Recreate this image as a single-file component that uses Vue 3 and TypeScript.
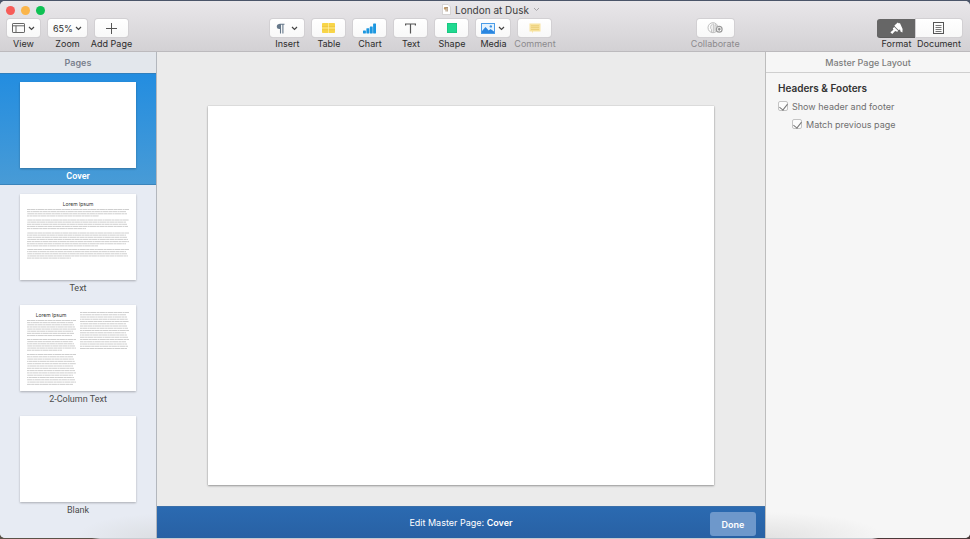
<script setup lang="ts">
import { ref } from 'vue'

interface Line { x: number; y: number; w: number }
interface Master { name: string; title?: 'center' | 'left'; lines: Line[] }

// Rows of simulated body copy, starting at y with a fixed pitch; the last row is shortened.
function paragraph(x: number, y: number, count: number, width: number, last: number, pitch = 2.15): Line[] {
  return Array.from({ length: count }, (_, i) => ({
    x,
    y: y + i * pitch,
    w: i === count - 1 ? last : width - ((i * 7) % 4),
  }))
}

const masters: Master[] = [
  { name: 'Cover', lines: [] },
  {
    name: 'Text',
    title: 'center',
    lines: [
      ...paragraph(7, 15.5, 4, 102, 72),
      ...paragraph(7, 26, 5, 102, 59),
      ...paragraph(7, 39, 7, 102, 71),
      ...paragraph(7, 55.5, 5, 102, 44),
    ],
  },
  {
    name: '2-Column Text',
    title: 'left',
    lines: [
      ...paragraph(7, 15.5, 8, 49, 45),
      ...paragraph(7, 34.5, 6, 49, 35),
      ...paragraph(7, 49.5, 14, 49, 46, 2.3),
      ...paragraph(60, 7.5, 17, 49, 47, 2.25),
    ],
  },
  { name: 'Blank', lines: [] },
]

const selected = ref('Cover')
const zoom = ref('65%')
const panel = ref<'Format' | 'Document'>('Format')
const showHeader = ref(true)
const matchPrevious = ref(true)
</script>

<template>
  <div class="window">
    <header class="toolbar">
      <div class="titlebar">
        <div class="lights">
          <button class="light red" aria-label="Close"></button>
          <button class="light amber" aria-label="Minimize"></button>
          <button class="light green" aria-label="Full screen"></button>
        </div>
        <h1 class="title">
          <svg class="doc" viewBox="0 0 9 11" width="9" height="11">
            <path d="M.5.5h5.500l2.500 2.500v7.500H.5z" fill="#fff" stroke="#c9c6c4" stroke-width=".7" />
            <path d="M2.300 3.500h3.700M4 3.500v4M5.300 3.500v4" stroke="#a58a6c" stroke-width=".9" fill="none" />
            <circle cx="3.100" cy="4.400" r="1.200" fill="#c49a62" />
          </svg>
          <span>London at Dusk</span>
          <svg class="chev pale" viewBox="0 0 7 5" width="7" height="5"><path d="M1 1l2.500 2.500L6 1" /></svg>
        </h1>
      </div>

      <div class="tools">
        <div class="group">
          <div class="tool">
            <button id="t-view" class="btn">
              <svg viewBox="0 0 13 10" width="13" height="10" fill="none" stroke="#666" stroke-width="1">
                <rect x=".5" y=".5" width="12" height="9" rx=".6" /><path d="M.5 2.800h12M4 2.800v6.700" />
              </svg>
              <svg class="chev" viewBox="0 0 7 5" width="7" height="5"><path d="M1 1l2.500 2.500L6 1" /></svg>
            </button>
            <label for="t-view">View</label>
          </div>
          <div class="tool zoom">
            <div class="btn picker">
              <select id="t-zoom" v-model="zoom">
                <option>50%</option><option>65%</option><option>100%</option>
              </select>
              <svg class="chev" viewBox="0 0 7 5" width="7" height="5"><path d="M1 1l2.500 2.500L6 1" /></svg>
            </div>
            <label for="t-zoom">Zoom</label>
          </div>
          <div class="tool">
            <button id="t-add" class="btn">
              <svg viewBox="0 0 11 11" width="11" height="11" stroke="#555" stroke-width="1"><path d="M5.500 0v11M0 5.500h11" /></svg>
            </button>
            <label for="t-add">Add Page</label>
          </div>
        </div>

        <div class="group center">
          <div class="tool menu">
            <button id="t-insert" class="btn spread">
              <svg viewBox="0 0 9 11" width="9" height="11">
                <path d="M4.500 1H3.300a2.500 2.500 0 0 0 0 5h1.200z" fill="#66788a" />
                <path d="M3.500 1.200h5M4.500 1v9.500M6.900 1v9.500" stroke="#66788a" stroke-width="1.100" fill="none" />
              </svg>
              <svg class="chev" viewBox="0 0 7 5" width="7" height="5"><path d="M1 1l2.500 2.500L6 1" /></svg>
            </button>
            <label for="t-insert">Insert</label>
          </div>
          <div class="tool">
            <button id="t-table" class="btn">
              <svg viewBox="0 0 13 10" width="13" height="10">
                <rect width="13" height="10" rx=".8" fill="#f8d548" />
                <path d="M0 3.500h13M0 6.700h13" stroke="#ecc443" stroke-width=".7" />
                <path d="M6.500 0v10M0 5h13" stroke="#fff3b8" stroke-width=".6" />
              </svg>
            </button>
            <label for="t-table">Table</label>
          </div>
          <div class="tool">
            <button id="t-chart" class="btn">
              <svg viewBox="0 0 13 11" width="13" height="11" fill="#1c97e0">
                <rect x="0" y="7.500" width="2.900" height="3" rx=".4" /><rect x="3.400" y="5.200" width="2.900" height="5.300" rx=".4" />
                <rect x="6.800" y="3.500" width="2.900" height="7" rx=".4" /><rect x="10.100" y=".5" width="2.900" height="10" rx=".4" />
              </svg>
            </button>
            <label for="t-chart">Chart</label>
          </div>
          <div class="tool">
            <button id="t-text" class="btn">
              <svg viewBox="0 0 11 11" width="11" height="11" fill="none" stroke="#555" stroke-width="1.200">
                <path d="M.6 2.600V1h9.800v1.600M5.500 1v9.600" />
              </svg>
            </button>
            <label for="t-text">Text</label>
          </div>
          <div class="tool">
            <button id="t-shape" class="btn">
              <svg viewBox="0 0 10 10" width="10" height="10"><rect width="10" height="10" fill="#1fd990" /><rect x=".4" y=".4" width="9.200" height="9.200" fill="none" stroke="#19c37f" stroke-width=".8" /></svg>
            </button>
            <label for="t-shape">Shape</label>
          </div>
          <div class="tool menu">
            <button id="t-media" class="btn">
              <svg viewBox="0 0 14 11" width="14" height="11">
                <rect x=".5" y=".5" width="13" height="10" fill="#e4f2fd" stroke="#4a9ce8" />
                <path d="M1 8l3.500-4 3.200 3.400L9.500 6 13 8.600V10H1z" fill="#2a86e0" />
                <circle cx="9.800" cy="3.400" r="1.200" fill="#3b93e6" />
              </svg>
              <svg class="chev" viewBox="0 0 7 5" width="7" height="5"><path d="M1 1l2.500 2.500L6 1" /></svg>
            </button>
            <label for="t-media">Media</label>
          </div>
          <div class="tool off">
            <button id="t-comment" class="btn" disabled>
              <svg viewBox="0 0 12 11" width="12" height="11">
                <path d="M.5.5h11v8H4L3 10.500V8.500H.5z" fill="#f8e3a0" />
                <path d="M2 2.800h8M2 4.700h8M2 6.600h8" stroke="#e6c66c" stroke-width=".8" />
              </svg>
            </button>
            <label for="t-comment">Comment</label>
          </div>
        </div>

        <div class="group collab">
          <div class="tool off">
            <button id="t-collab" class="btn" disabled>
              <svg viewBox="0 0 16 12" width="16" height="12" fill="none" stroke="#b8b8b8" stroke-width=".9">
                <circle cx="6" cy="5.700" r="5" />
                <path d="M4.600 10V7.600C3.200 7 3.300 2.500 5.500 2.300M6.300 1.500v8.800M8 9.500V2.500c1.500.5 1.500 2 1.400 2.800" />
                <circle cx="12.200" cy="7.200" r="2.900" fill="#fff" stroke="#999" stroke-width="1.200" />
                <path d="M12.200 5.700v3M10.700 7.200h3" stroke="#888" stroke-width="1.200" />
              </svg>
            </button>
            <label for="t-collab">Collaborate</label>
          </div>
        </div>

        <div class="group segment">
          <div class="tool format">
            <button id="t-format" class="btn" :class="{ active: panel === 'Format' }" @click="panel = 'Format'">
              <svg viewBox="0 0 13 12" width="13" height="12" fill="currentColor">
                <path d="M4.400 3.600L7.800.4l1.200 1.200.9-.5 2.700 6-.2 3.300-1.900-.9-.4-1.900-1.600.4L5.200 4.700z" />
                <path d="M4.300 4.900l4 4-1.200.9-1.900-.8L2.200 12 .4 10.300l3-2.600-.6-1.500z" />
              </svg>
            </button>
            <label for="t-format">Format</label>
          </div>
          <div class="tool document">
            <button id="t-document" class="btn" :class="{ active: panel === 'Document' }" @click="panel = 'Document'">
              <svg viewBox="0 0 11 12" width="11" height="12" fill="none" stroke="#555" stroke-width="1">
                <rect x=".5" y=".5" width="10" height="11" /><path d="M2.500 3.500h6M2.500 5.500h6M2.500 7.500h6M2.500 9.500h6" stroke-width=".8" />
              </svg>
            </button>
            <label for="t-document">Document</label>
          </div>
        </div>
      </div>
    </header>

    <div class="body">
      <nav class="sidebar" aria-label="Pages">
        <h2 class="side-head">Pages</h2>
        <ul>
          <li v-for="m in masters" :key="m.name">
            <button class="master" :class="{ selected: selected === m.name }" @click="selected = m.name">
              <span class="thumb">
                <svg viewBox="0 0 116 86">
                  <text v-if="m.title" class="lorem" :x="m.title === 'center' ? 58 : 31" y="12">Lorem Ipsum</text>
                  <line
                    v-for="(l, i) in m.lines" :key="i" class="copy"
                    :x1="l.x" :x2="l.x + l.w" :y1="l.y" :y2="l.y" :stroke-dashoffset="i * 5"
                  />
                </svg>
              </span>
              <span class="name">{{ m.name }}</span>
            </button>
          </li>
        </ul>
      </nav>

      <main class="editor">
        <div class="canvas"><div class="page"></div></div>
        <footer class="masterbar">
          <span></span>
          <p>Edit Master Page: <b>{{ selected }}</b></p>
          <button class="done">Done</button>
        </footer>
      </main>

      <aside class="inspector">
        <h2 class="panel-head">Master Page Layout</h2>
        <fieldset>
          <legend>Headers &amp; Footers</legend>
          <label class="check"><input v-model="showHeader" type="checkbox" />Show header and footer</label>
          <label class="check nested"><input v-model="matchPrevious" type="checkbox" />Match previous page</label>
        </fieldset>
      </aside>
    </div>
  </div>
</template>

<style>
body {
  background: linear-gradient(90deg, #5a5248 0 92px, #c9cbd0 100px calc(100% - 98px), #4a3a3a calc(100% - 92px)) bottom / 100% 8px no-repeat, #4b5569;
}
</style>

<style scoped>
* { box-sizing: border-box; margin: 0; padding: 0; }
.window {
  display: flex;
  flex-direction: column;
  height: calc(100vh - 2px);
  margin: 1px 0;
  overflow: hidden;
  border-radius: 5px;
  background: #ebebeb;
  font-family: Inter, "Liberation Sans", sans-serif;
  font-size: 9px;
  color: #2c2c2c;
}
button, select { font: inherit; color: inherit; border: 0; background: none; }
.toolbar {
  border-bottom: 1px solid #bcbabd;
  background: linear-gradient(#e9e7ea, #d3d1d4);
}
.titlebar { display: grid; grid-template-columns: 1fr auto 1fr; align-items: center; height: 18px; padding-left: 6px; }
.lights { display: flex; gap: 6px; }
.light { width: 9px; height: 9px; border-radius: 50%; }
.red { background: #f75c58; }
.amber { background: #fbb54a; }
.green { background: #0ec153; }
.title { display: flex; align-items: center; gap: 4px; padding: 0 0 1px 6px; font-size: 10px; line-height: 16px; font-weight: 400; color: #3c3c3c; }
.chev { fill: none; stroke: #444; stroke-width: 1.2; }
.pale { stroke: #a5a3a6; stroke-width: 1; }

.tools { display: grid; grid-template-columns: 263fr auto 145fr 37px 143fr auto; padding: 0 8px 0 7px; }
.group { display: flex; gap: 8px; }
.tool { display: flex; flex-direction: column; align-items: center; width: 33px; }
.tool label { line-height: 14px; white-space: nowrap; margin: 0 -10px; }
.tool.menu { width: 34px; }
.tool.zoom { width: 39px; }
.center { grid-column: 2; }
.collab { grid-column: 4; }
.collab .tool { width: 37px; }
.btn {
  display: flex;
  align-items: center;
  justify-content: center;
  gap: 3px;
  width: 100%;
  height: 18px;
  border-radius: 3px;
  background: linear-gradient(#fff, #f8f8f8);
  box-shadow: 0 0 0 1px #d2d0d3, 0 1px 0 #bdbbbe;
}
.spread { gap: 6px; }
.picker { gap: 2px; }
.picker select { appearance: none; outline: 0; width: 20px; }
.off label { color: #8c8a8d; }
.group.segment { grid-column: 6; gap: 0; }
.tool.format { width: 39px; }
.tool.document { width: 46px; }
.format .btn { border-radius: 3px 0 0 3px; }
.document .btn { border-radius: 0 3px 3px 0; }
.btn.active { background: #666; color: #fff; box-shadow: 0 1px 0 #5c5c5c; }

.body { display: grid; grid-template-columns: 157px 1fr 205px; flex: 1; min-height: 0; }
.sidebar {
  border-right: 1px solid #b3b7bd;
  background: radial-gradient(ellipse 80px 24px at 100% 100%, #dcdfe3, transparent), #e7ebf3;
}
.side-head { height: 21px; line-height: 21px; text-align: center; font-size: 9px; font-weight: 600; color: #7a818e; background: #e3e7ec; }
ul { list-style: none; }
.master {
  display: flex;
  flex-direction: column;
  align-items: center;
  width: 100%;
  height: 111px;
  padding-top: 9px;
  font-family: Roboto, "Liberation Sans", sans-serif;
  color: #4c4c4c;
}
.master.selected {
  height: 112px;
  padding-top: 8px;
  background: linear-gradient(#238de0, #489bd6);
  border-top: 1px solid #2f7fbd;
  border-bottom: 1px solid #3a84bb;
  color: #fff;
  font-weight: 600;
}
.thumb { width: 116px; height: 86px; background: #fff; box-shadow: 0 1px 2px #0004; }
.thumb svg { display: block; width: 100%; height: 100%; }
.lorem { font-family: Inter, "Liberation Sans", sans-serif; font-size: 5px; fill: #333; text-anchor: middle; font-weight: 400; }
.copy { stroke: #c8c8c8; stroke-width: 0.9; stroke-dasharray: 3 0.3 5 0.4 2 0.3 6 0.4; }
.name { line-height: 17px; }

.editor { display: flex; flex-direction: column; min-width: 0; }
.canvas { flex: 1; display: grid; align-items: center; padding: 33px 51px 0; }
.page { aspect-ratio: 506 / 379; background: #fff; box-shadow: 0 0 1px #0004, 0 1px 2px #0005; }
.masterbar {
  display: grid;
  grid-template-columns: 1fr auto 1fr;
  align-items: center;
  height: 32px;
  padding: 0 9px;
  border-top: 1px solid #3b6fa9;
  background: linear-gradient(#2b6ab1, #2861a4);
  color: #fff;
}
.masterbar b { font-weight: 600; }
.done { justify-self: end; width: 46px; height: 24px; margin-top: 3px; border-radius: 3px; background: #6e98cb; color: #fff; font-size: 9px; font-weight: 600; }

.inspector {
  border-left: 1px solid #bdbdbd;
  background: radial-gradient(ellipse 120px 26px at 0 100%, #e2e2e2, transparent), #f6f6f6;
}
.panel-head { height: 21px; line-height: 21px; border-bottom: 1px solid #cfcfcf; text-align: center; font-size: 9px; font-weight: 500; color: #7d7d7d; }
fieldset { border: 0; padding: 6px 12px; }
legend { float: left; width: 100%; line-height: 18px; font-size: 10px; font-weight: 600; color: #333; }
.check { clear: both; display: flex; align-items: center; gap: 4px; height: 18px; font-size: 9px; color: #707070; }
.nested { padding-left: 14px; }
.check input {
  appearance: none;
  display: grid;
  place-items: center;
  width: 10px;
  height: 10px;
  border: 1px solid #c4c4c4;
  border-radius: 2px;
  background: #fcfcfc;
}
.check input:checked::after {
  content: "";
  width: 4px;
  height: 7px;
  margin-bottom: 2px;
  border: solid #777;
  border-width: 0 1px 1px 0;
  transform: rotate(38deg);
}
</style>
